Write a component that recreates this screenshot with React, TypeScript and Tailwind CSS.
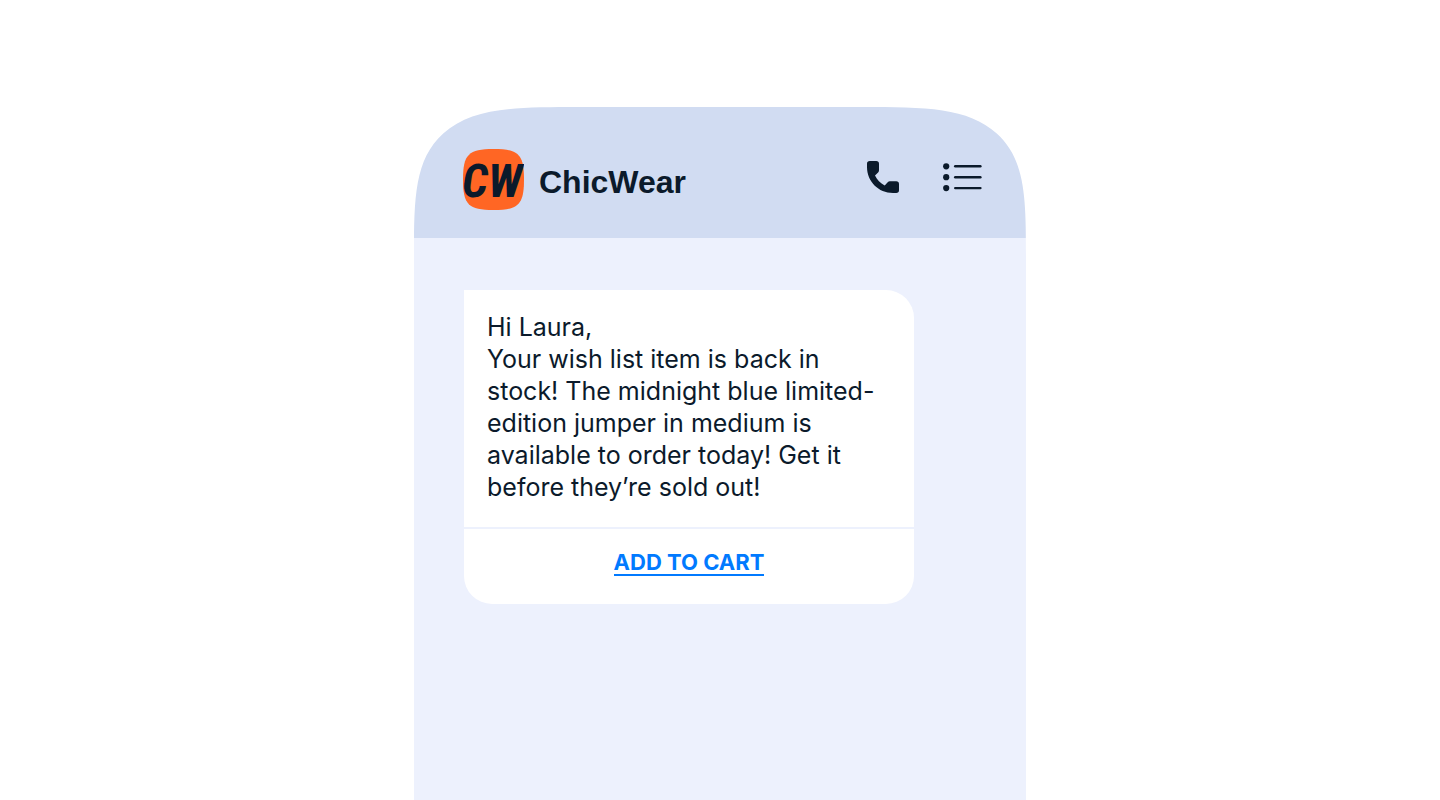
const message = {
    greeting: 'Hi Laura,',
    body: 'Your wish list item is back in stock! The midnight blue limited-edition jumper in medium is available to order today! Get it before they’re sold out!',
};

function BrandLogo() {
    return (
        <svg className="w-[61px] h-[61px]" viewBox="0 0 61 61" role="img" aria-label="CW">
            <path
                d="M30.5 0C55.5 0 61 5.5 61 30.5S55.5 61 30.5 61 0 55.5 0 30.5 5.5 0 30.5 0Z"
                fill="#ff6624"
            />
            <text
                x="29"
                y="48"
                textAnchor="middle"
                fill="#0b1a2b"
                fontFamily="'Roboto Condensed', 'Liberation Sans Narrow', Roboto, sans-serif"
                fontSize="47"
                fontWeight="700"
                fontStyle="italic"
            >
                CW
            </text>
        </svg>
    );
}

function PhoneIcon() {
    return (
        <svg className="w-8 h-8" viewBox="0 0 32 32" fill="#0b1a2b" aria-hidden="true">
            <path d="M2.8 0H9.2C11 0 12 1 12 2.8V9.2C12 10.2 11.7 10.8 11.1 11.4L8 14.5C10 18.7 13.3 22.3 17.7 24.4L20.7 21.3C21.3 20.6 22 20.3 22.9 20.3H29.2C31 20.3 32 21.3 32 23.1V29.2C32 31 31 32 29.2 32H26C11.5 32 0 20.5 0 6V2.8C0 1 1 0 2.8 0Z" />
        </svg>
    );
}

function ListIcon() {
    return (
        <svg className="w-10 h-8" viewBox="0 0 40 32" fill="#0b1a2b" aria-hidden="true">
            {[5.3, 16.2, 27.1].map((y) => (
                <g key={y}>
                    <circle cx="4.2" cy={y} r="3.1" />
                    <path d={`M13.2 ${y}H38.4`} stroke="#0b1a2b" strokeWidth="2.4" strokeLinecap="round" />
                </g>
            ))}
        </svg>
    );
}

function ChatHeader() {
    return (
        <header className="flex items-center bg-[#d1dcf2] pt-[42px] pb-7 pl-[49px] pr-11">
            <BrandLogo />
            <h1 className="ml-[15px] pt-1 text-[32px] leading-10 font-bold font-['Liberation_Sans',sans-serif]">
                ChicWear
            </h1>
            <div className="ml-auto flex items-center gap-[43px] pb-[5px]">
                <button type="button" aria-label="Call">
                    <PhoneIcon />
                </button>
                <button type="button" aria-label="Menu">
                    <ListIcon />
                </button>
            </div>
        </header>
    );
}

function MessageCard() {
    return (
        <article className="max-w-[450px] bg-white rounded-[28px] rounded-tl-none">
            <div className="pl-[23px] pr-8 pt-[21px] pb-6 text-[25px] leading-8">
                <p>{message.greeting}</p>
                <p>{message.body}</p>
            </div>
            <div className="border-t-2 border-[#edf1fd] pt-[22px] pb-7 text-center">
                <a
                    href="#cart"
                    className="inline-block border-b-2 border-[#017aff] text-[22px] leading-[23px] font-bold text-[#017aff]"
                >
                    ADD TO CART
                </a>
            </div>
        </article>
    );
}

export default function App() {
    return (
        <main className="flex min-h-screen justify-center bg-white pt-[107px] text-[#0b1a2b] font-['Inter',sans-serif]">
            <div className="flex w-full max-w-[612px] flex-col overflow-hidden rounded-t-[165px_150px] [corner-shape:superellipse(1.83)]">
                <ChatHeader />
                <section className="flex-1 bg-[#edf1fd] px-[50px] pt-13 pb-12">
                    <MessageCard />
                </section>
            </div>
        </main>
    );
}
